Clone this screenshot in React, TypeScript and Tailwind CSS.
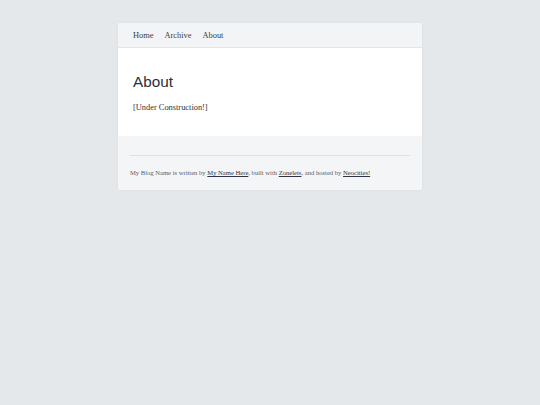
export default function App() {
  const serif = { fontFamily: '"Liberation Serif", "Times New Roman", serif' };
  return (
    <div className="min-h-[405px] w-full bg-[#e5e8eb] pt-[23px]" style={serif}>
      <div className="mx-auto w-[304px] bg-white shadow-[0_0_2px_rgba(0,0,0,0.06)]">
        <nav className="flex h-[25px] items-center gap-[11px] border-b border-[#e2e5e9] bg-[#f3f4f6] px-[15px] pt-[2px] text-[8.4px] text-[#3c3f44]">
          <a>Home</a>
          <a>Archive</a>
          <a>About</a>
        </nav>
        <main className="h-[88px] px-[15px] pt-[26px]">
          <h1
            className="text-[15.3px] leading-none text-[#2a3038]"
            style={{ fontFamily: '"Liberation Sans", Arial, sans-serif' }}
          >
            About
          </h1>
          <p className="mt-[15px] text-[8.4px] leading-none text-[#333333]">[Under Construction!]</p>
        </main>
        <footer className="h-[54px] bg-[#f4f5f7] px-[12px] pt-[19px]">
          <div className="h-px bg-[#dde1e6]" />
          <p className="mt-[14px] text-[6.6px] leading-none text-[#5c5f66]">
            My Blog Name is written by{" "}
            <a className="text-[#2e3440] underline decoration-1 underline-offset-1">My Name Here</a>, built with{" "}
            <a className="text-[#2e3440] underline decoration-1 underline-offset-1">Zonelets</a>, and hosted by{" "}
            <a className="text-[#2e3440] underline decoration-1 underline-offset-1">Neocities!</a>
          </p>
        </footer>
      </div>
    </div>
  );
}
